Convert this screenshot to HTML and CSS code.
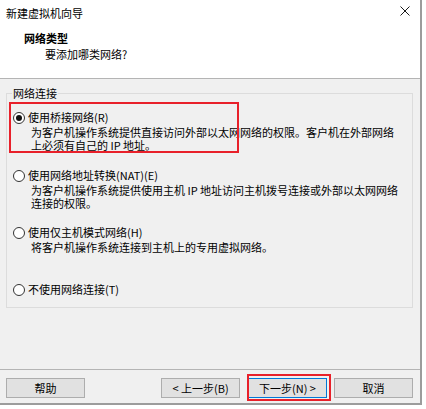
FILE: index.html
```html
<!DOCTYPE html>
<html lang="zh-CN">
<head>
<meta charset="utf-8">
<title>新建虚拟机向导</title>
<link rel="stylesheet" href="styles.css">
</head>
<body>
<div class="window">
  <div class="titlebar">
    <span class="title">新建虚拟机向导</span>
    <svg class="close" width="10" height="10" viewBox="0 0 10 10"><path d="M0.5 0.5 L9.5 9.5 M9.5 0.5 L0.5 9.5" stroke="#1a1a1a" stroke-width="1" fill="none"/></svg>
  </div>
  <div class="header">
    <div class="h-title">网络类型</div>
    <div class="h-sub">要添加哪类网络?</div>
  </div>
  <div class="body">
    <fieldset class="group">
      <legend class="legend">网络连接</legend>
      <div class="option opt-first">
        <div class="radio-row"><span class="radio checked"></span><span class="label">使用桥接网络(R)</span></div>
        <div class="desc">为客户机操作系统提供直接访问外部以太网网络的权限。客户机在外部网络<br>上必须有自己的 IP 地址。</div>
      </div>
      <div class="option">
        <div class="radio-row"><span class="radio"></span><span class="label">使用网络地址转换(NAT)(E)</span></div>
        <div class="desc">为客户机操作系统提供使用主机 IP 地址访问主机拨号连接或外部以太网网络<br>连接的权限。</div>
      </div>
      <div class="option">
        <div class="radio-row"><span class="radio"></span><span class="label">使用仅主机模式网络(H)</span></div>
        <div class="desc">将客户机操作系统连接到主机上的专用虚拟网络。</div>
      </div>
      <div class="option opt-last">
        <div class="radio-row"><span class="radio"></span><span class="label">不使用网络连接(T)</span></div>
      </div>
    </fieldset>
  </div>
  <div class="buttonbar">
    <button class="btn">帮助</button>
    <span class="spacer"></span>
    <button class="btn">&lt; 上一步(B)</button>
    <button class="btn btn-default">下一步(N) &gt;</button>
    <button class="btn btn-cancel">取消</button>
  </div>
  <div class="mark mark-option"></div>
  <div class="mark mark-next"></div>
</div>
</body>
</html>
```

FILE: styles.css
```css
* { box-sizing: border-box; }
html, body { margin: 0; padding: 0; background: #ffffff; }
body {
  font-family: "Noto Sans CJK SC", "Noto Sans", sans-serif;
  font-size: 11px;
  color: #000;
}
.window {
  position: relative;
  width: 422px;
  height: 405px;
  border-right: 2px solid #9c9c9c;
  border-bottom: 2px solid #9c9c9c;
  background: #f0f0f0;
  display: flex;
  flex-direction: column;
}
.titlebar {
  height: 24px;
  background: #fff;
  display: flex;
  align-items: center;
  justify-content: space-between;
  padding: 1px 10px 0 6px;
  line-height: 14px;
}
.title { font-size: 11px; }
.close { display: block; margin-top: -3px; }
.header {
  height: 55px;
  background: #fff;
  border-bottom: 1px solid #b4b4b4;
  padding-top: 7px;
}
.h-title {
  font-weight: bold;
  line-height: 14px;
  padding-left: 24px;
}
.h-sub {
  line-height: 14px;
  margin-top: 2px;
  padding-left: 45px;
}
.body {
  flex: 1;
  padding-top: 7px;
}
.group {
  margin: 0 7px 0 6px;
  border: 1px solid #dcdcdc;
  padding: 9px 0 0 6px;
  min-width: 0;
}
.legend {
  padding: 0 1px;
  margin-left: -1px;
  line-height: 14px;
}
.option { height: 57px; }
.option.opt-first { height: 58px; }
.option.opt-last { height: 26px; }
.radio-row {
  display: flex;
  align-items: center;
  height: 17px;
  gap: 3px;
}
.radio {
  width: 12px;
  height: 12px;
  border: 1px solid #333;
  border-radius: 50%;
  background: #fff;
  display: flex;
  align-items: center;
  justify-content: center;
  flex: none;
}
.radio.checked::after {
  content: "";
  width: 6px;
  height: 6px;
  border-radius: 50%;
  background: #111;
}
.label { line-height: 17px; white-space: nowrap; }
.desc {
  padding-left: 18px;
  line-height: 12.5px;
  margin-top: 0;
  white-space: nowrap;
}
.buttonbar {
  height: 34px;
  border-top: 1px solid #b4b4b4;
  display: flex;
  align-items: flex-start;
  padding: 8px 7px 0 6px;
}
.spacer { flex: 1; }
.btn {
  width: 79px;
  height: 20px;
  background: #e1e1e1;
  border: 1px solid #adadad;
  font-family: inherit;
  font-size: 11px;
  color: #000;
  padding: 0;
  line-height: 17px;
  margin: 0;
}
.btn-default {
  margin-left: 8px;
  border-color: #0078d7;
}
.btn-cancel { margin-left: 7px; }
.mark {
  position: absolute;
  border: 2px solid #e8202a;
  pointer-events: none;
}
.mark-option { left: 9px; top: 102px; width: 230px; height: 51px; }
.mark-next { left: 247px; top: 374px; width: 84px; height: 27px; }
```
